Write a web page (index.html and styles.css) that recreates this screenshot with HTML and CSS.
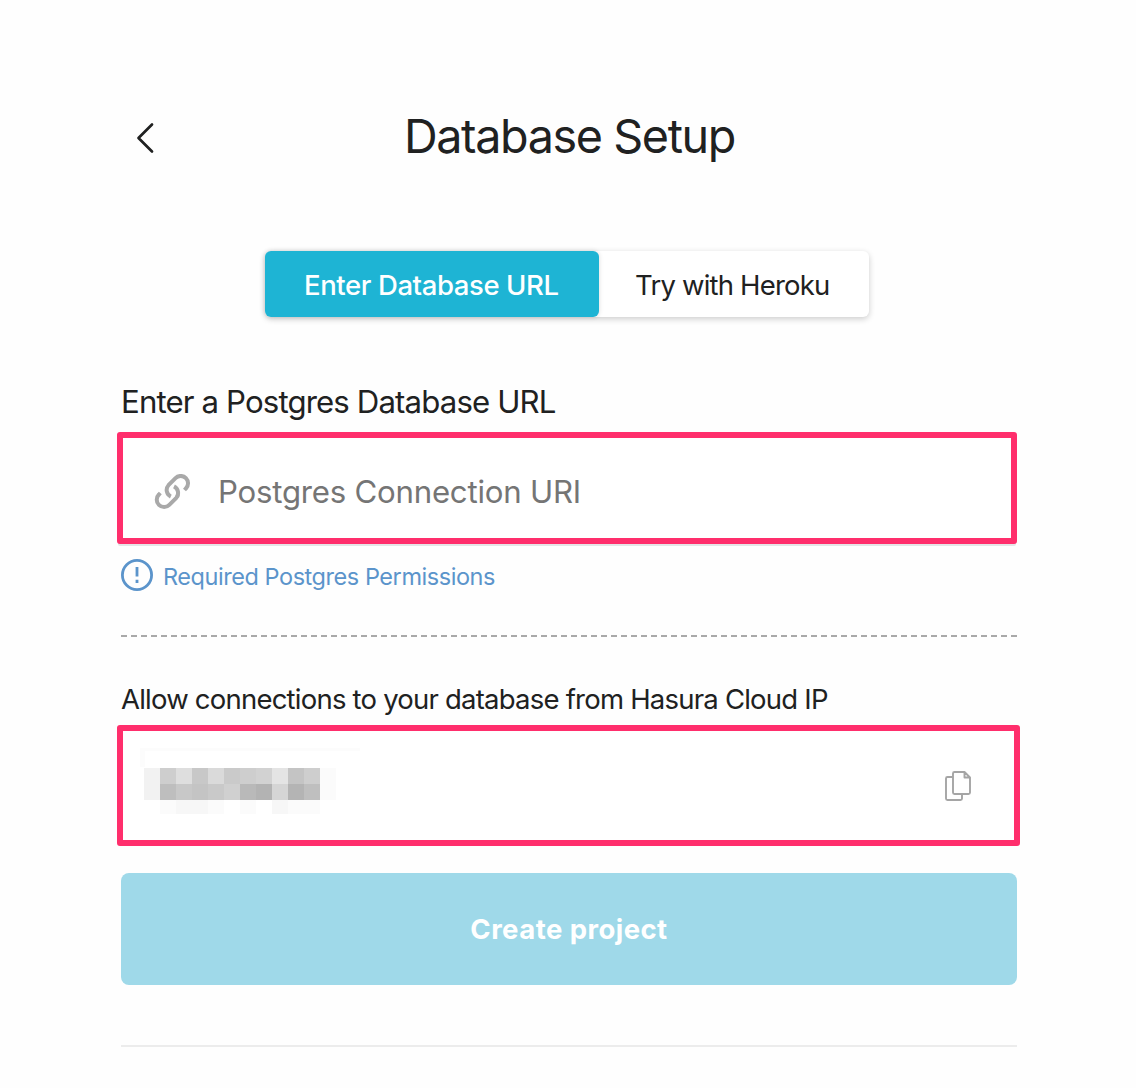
FILE: index.html
```html
<!DOCTYPE html>
<html lang="en">
<head>
<meta charset="utf-8">
<title>Database Setup</title>
<link rel="stylesheet" href="styles.css">
</head>
<body>
<main class="page">
  <header class="header">
    <svg class="back" width="20" height="32" viewBox="0 0 20 32" role="button" aria-label="Back"><path d="M17 2.500 3.500 16l13.500 13.500"/></svg>
    <h1 class="title">Database Setup</h1>
  </header>

  <nav class="tabs">
    <button class="tab tab-active"><span>Enter Database URL</span></button>
    <button class="tab tab-heroku"><span>Try with Heroku</span></button>
  </nav>

  <label class="label url-label">Enter a Postgres Database URL</label>
  <div class="frame url-frame">
    <svg class="link-icon" width="37" height="36" viewBox="0 0 37 36"><path d="M30.5 16 31.9 14.5A7.3 7.3 0 0 0 21.5 4.1L14.5 11.2A7.3 7.3 0 0 0 16.8 22.6"/><path transform="rotate(180 18.4 17.5)" d="M30.5 16 31.9 14.5A7.3 7.3 0 0 0 21.5 4.1L14.5 11.2A7.3 7.3 0 0 0 16.8 22.6"/></svg>
    <span class="placeholder">Postgres Connection URI</span>
  </div>

  <a class="permissions">
    <svg width="32" height="32" viewBox="0 0 32 32"><circle cx="16" cy="16" r="14.6"/><path d="M16 8v9.6M16 20.8V24"/></svg>
    <span>Required Postgres Permissions</span>
  </a>
  <hr class="dashed">

  <div class="label ip-label">Allow connections to your database from Hasura Cloud IP</div>
  <div class="frame ip-frame">
    <svg class="mosaic" width="220" height="66" viewBox="0 0 220 66" shape-rendering="crispEdges">
      <path fill="#fcfcfc" d="M0 0h225v3H0zM0 3h5v16H0z"/>
      <g transform="translate(4 20)">
        <path fill="#f2f2f2" d="M0 0h16v32H0z"/>
        <path fill="#cecece" d="M16 0h16v16H16z"/><path fill="#dedede" d="M32 0h16v16H32z"/><path fill="#c8c8c8" d="M48 0h16v16H48z"/><path fill="#dadada" d="M64 0h16v16H64z"/><path fill="#cacaca" d="M80 0h16v16H80z"/><path fill="#cecece" d="M96 0h16v16H96z"/><path fill="#d2d2d2" d="M112 0h16v16h-16z"/><path fill="#e4e4e4" d="M128 0h16v16h-16z"/><path fill="#c4c4c4" d="M144 0h16v16h-16z"/><path fill="#cecece" d="M160 0h16v16h-16z"/>
        <path fill="#bebebe" d="M16 16h16v16H16z"/><path fill="#c8c8c8" d="M32 16h16v16H32z"/><path fill="#c4c4c4" d="M48 16h16v16H48z"/><path fill="#c9c9c9" d="M64 16h16v16H64z"/><path fill="#d0d0d0" d="M80 16h16v16H80z"/><path fill="#b9b9b9" d="M96 16h16v16H96z"/><path fill="#b3b3b3" d="M112 16h16v16h-16z"/><path fill="#d5d5d5" d="M128 16h16v16h-16z"/><path fill="#b4b4b4" d="M144 16h16v16h-16z"/><path fill="#bfbfbf" d="M160 16h16v16h-16z"/>
        <path fill="#fbfbfb" d="M176 0h16v32h-16zM16 32h16v14H16zM64 32h16v14H64zM96 32h16v14H96zM144 32h32v14h-32z"/>
        <path fill="#f7f7f7" d="M32 32h32v14H32zM128 32h16v14h-16z"/>
      </g>
    </svg>
    <svg class="copy" width="28" height="32" viewBox="0 0 28 32"><path d="M8.500 7H3.500A1.500 1.500 0 0 0 2 8.500v20A1.500 1.500 0 0 0 3.500 30h13a1.500 1.500 0 0 0 1.500-1.500V24M20.500 2H10.500A1.500 1.500 0 0 0 9 3.500v19A1.500 1.500 0 0 0 10.500 24h14a1.500 1.500 0 0 0 1.500-1.500V7.500zM20.500 2v5.500H26"/></svg>
  </div>

  <button class="create"><span>Create project</span></button>
  <hr class="rule">
</main>
</body>
</html>
```
FILE: styles.css
```css
* { box-sizing: border-box; }
body { margin: 0; background: #fefefe; color: #202121; font-family: Inter, "Liberation Sans", sans-serif; }
button { border: 0; padding: 0; margin: 0; font: inherit; color: inherit; background: none; }
svg { flex: none; fill: none; }
span, h1, .label { white-space: nowrap; }

.page { width: 1136px; height: 1088px; padding: 106px 119px 0 121px; display: flex; flex-direction: column; overflow: hidden; }
.header { display: grid; grid-template-columns: 283px auto; align-items: center; height: 60px; }
.back { margin: 4px 0 0 14px; stroke: #202121; stroke-width: 2.7; stroke-linecap: round; stroke-linejoin: round; }
.title { margin: 0; font-size: 46.7px; font-weight: 400; line-height: 60px; letter-spacing: -1.4px; }

.tabs { display: flex; width: 604px; height: 66px; margin: 85px 0 0 144px; border-radius: 6px; background: #fff; box-shadow: 0 2px 6px rgba(0, 0, 0, .2); font-size: 27.5px; }
.tab { display: flex; align-items: center; padding-top: 2px; }
.tab-active { width: 334px; padding-left: 39px; border-radius: 6px; background: #1eb4d4; color: #fff; font-weight: 500; letter-spacing: -0.4px; box-shadow: 0 0 5px rgba(0, 0, 0, .14); }
.tab-heroku { padding-left: 36px; letter-spacing: -0.8px; }

.label { line-height: 40px; }
.url-label { margin-top: 65px; font-size: 31.2px; letter-spacing: -0.87px; }
.frame { display: flex; align-items: center; margin-left: -4px; border: 6px solid #ff2e6c; border-radius: 3px; background: #fff; }
.url-frame { width: 900px; height: 112px; margin-top: 10px; padding: 7px 0 0 31px; box-shadow: 0 3px 0 -1px #e4e5e6; }
.link-icon { stroke: #a9a9a9; stroke-width: 4; }
.placeholder { margin-left: 27px; color: #757575; font-size: 31.2px; letter-spacing: -0.23px; }

.permissions { display: flex; align-items: center; gap: 10px; height: 32px; margin-top: 15px; color: #5b94cb; font-size: 23.5px; letter-spacing: -0.45px; }
.permissions svg { stroke: #5b94cb; stroke-width: 2.8; }
.permissions span { padding-top: 3px; }
.dashed { width: 896px; height: 2px; margin: 44px 0 0; border: 0; background: repeating-linear-gradient(90deg, #a9a9a9 0 6px, transparent 6px 10px); }

.ip-label { margin-top: 42px; font-size: 27.5px; letter-spacing: -0.78px; }
.ip-frame { width: 903px; height: 121px; margin-top: 6px; padding: 0 42px 0 17px; justify-content: space-between; }
.mosaic { margin-bottom: 10px; }
.copy { stroke: #a5a5a5; stroke-width: 1.9; stroke-linejoin: round; }

.create { display: flex; align-items: center; justify-content: center; width: 896px; height: 112px; margin-top: 27px; border-radius: 8px; background: #9fd9e9; color: #fff; font-size: 27.5px; font-weight: 700; letter-spacing: 0.45px; }
.rule { width: 896px; height: 2px; margin: 60px 0 0; border: 0; background: #ececec; }
```
